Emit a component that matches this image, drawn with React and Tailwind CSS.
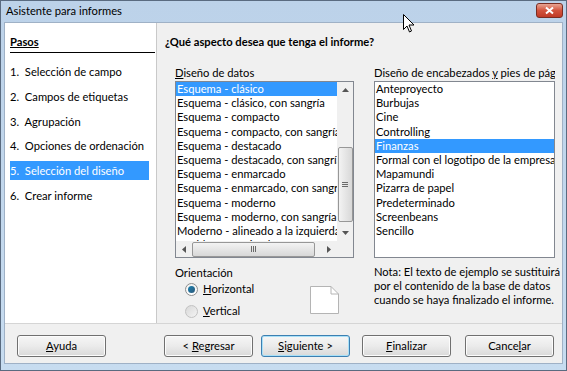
import React from "react";

const font = { fontFamily: 'Lato, "Noto Sans", sans-serif' };

const steps = [
  "1.  Selección de campo",
  "2.  Campos de etiquetas",
  "3.  Agrupación",
  "4.  Opciones de ordenación",
  "5.  Selección del diseño",
  "6.  Crear informe",
];

const dataLayouts = [
  "Esquema - clásico",
  "Esquema - clásico, con sangría",
  "Esquema - compacto",
  "Esquema - compacto, con sangría",
  "Esquema - destacado",
  "Esquema - destacado, con sangría",
  "Esquema - enmarcado",
  "Esquema - enmarcado, con sangría",
  "Esquema - moderno",
  "Esquema - moderno, con sangría",
  "Moderno - alineado a la izquierda",
  "Por bloques - simple",
];

const headerLayouts = [
  "Anteproyecto",
  "Burbujas",
  "Cine",
  "Controlling",
  "Finanzas",
  "Formal con el logotipo de la empresa",
  "Mapamundi",
  "Pizarra de papel",
  "Predeterminado",
  "Screenbeans",
  "Sencillo",
];

function Btn({ children, focused, className = "" }) {
  return (
    <button
      className={
        "h-[22px] w-[89px] rounded-[3px] border text-[11.2px] leading-none text-black bg-gradient-to-b from-[#f6f6f6] via-[#ebebeb] to-[#d9d9d9] " +
        (focused
          ? "border-[#3c7fb1] shadow-[inset_0_0_0_1px_#a8e0f8] "
          : "border-[#707070] shadow-[inset_0_0_0_1px_#fcfcfc] ") +
        className
      }
    >
      {children}
    </button>
  );
}

function Radio({ checked, children }) {
  return (
    <div className="flex items-center h-[22px] gap-[5px]">
      <span
        className={
          "w-[13px] h-[13px] rounded-full border flex items-center justify-center " +
          (checked
            ? "border-[#8e8f8f] bg-gradient-to-b from-[#f0f0f0] to-[#ffffff]"
            : "border-[#c2c2c2] bg-gradient-to-br from-[#d8d8d8] to-[#f4f4f4]")
        }
      >
        {checked && (
          <span className="w-[7px] h-[7px] rounded-full bg-gradient-to-br from-[#0c7fb0] to-[#2d5a7a]" />
        )}
      </span>
      <span className="text-[11.2px]">{children}</span>
    </div>
  );
}

export default function App() {
  return (
    <div
      className="w-[567px] h-[371px] relative overflow-hidden bg-gradient-to-b from-[#bcd2e9] to-[#c7dcf0] border border-[#5a6b80] flex flex-col text-black"
      style={font}
    >
      {/* title bar */}
      <div className="h-[21px] flex items-center justify-between pl-[5px] pr-[3px]">
        <span className="text-[11.2px] text-black">Asistente para informes</span>
        <div className="w-[27px] h-[15px] -mt-[3px] rounded-[3px] border border-[#7a2d22] bg-gradient-to-b from-[#e8a493] via-[#d2533d] to-[#c03a26] flex items-center justify-center">
          <svg width="11" height="9" viewBox="0 0 11 9">
            <path d="M2 1.5 L9 7.5 M9 1.5 L2 7.5" stroke="#fff" strokeWidth="2" />
          </svg>
        </div>
      </div>

      {/* client */}
      <div className="mx-[3px] flex-1 flex flex-col bg-[#f0f0f0] border border-[#9fb1c6]">
        <div className="flex h-[301px] border-b border-[#d5d5d5]">
          {/* left panel */}
          <div className="w-[152px] bg-white border-r border-[#c9c9c9] pt-[10px] pr-[1px]">
            <div className="ml-[5px] border-b border-black pb-[1px] text-[11.2px] font-bold leading-[18px]">
              <span className="underline">Pasos</span>
            </div>
            <div className="mt-[9px] flex flex-col gap-[5.8px] pl-[5px] pr-[6px]">
              {steps.map((s, i) => (
                <div
                  key={s}
                  className={
                    "h-[19px] leading-[19px] text-[11.2px] whitespace-pre " +
                    (i === 4 ? "bg-[#3399ff] text-white" : "")
                  }
                >
                  {s}
                </div>
              ))}
            </div>
          </div>

          {/* right panel */}
          <div className="flex-1 pt-[10px] pl-[8px]">
            <div className="text-[11.2px] font-bold leading-[18px]">
              ¿Qué aspecto desea que tenga el informe?
            </div>
            <div className="flex gap-[20px] ml-[10px] mt-[14px]">
              {/* data layouts */}
              <div className="w-[179px]">
                <div className="text-[11.2px] leading-[16px]">
                  <span className="underline">D</span>iseño de datos
                </div>
                <div className="h-[177px] border border-[#828790] bg-white flex flex-col">
                  <div className="flex flex-1 overflow-hidden">
                    <div className="flex-1 overflow-hidden">
                      {dataLayouts.map((d, i) => (
                        <div
                          key={d}
                          className={
                            "h-[14.2px] leading-[14px] text-[11.2px] whitespace-nowrap pl-[1px] " +
                            (i === 0 ? "bg-[#3399ff] text-white" : "")
                          }
                        >
                          {d}
                        </div>
                      ))}
                    </div>
                    {/* vertical scrollbar */}
                    <div className="w-[16px] bg-[#f0f0f0] flex flex-col items-center">
                      <div className="h-[16px] flex items-center justify-center">
                        <svg width="7" height="4" viewBox="0 0 7 4">
                          <path d="M0 4 L3.5 0 L7 4Z" fill="#555" />
                        </svg>
                      </div>
                      <div className="h-[49px]" />
                      <div className="w-[15px] h-[75px] rounded-[2px] border border-[#979797] bg-gradient-to-r from-[#f3f3f3] to-[#d8d8d8] flex flex-col items-center justify-center gap-[1px]">
                        <span className="w-[6px] h-[1px] bg-[#6a6a6a]" />
                        <span className="w-[6px] h-[1px] bg-[#6a6a6a]" />
                        <span className="w-[6px] h-[1px] bg-[#6a6a6a]" />
                      </div>
                      <div className="flex-1" />
                      <div className="h-[16px] flex items-center justify-center">
                        <svg width="7" height="4" viewBox="0 0 7 4">
                          <path d="M0 0 L3.5 4 L7 0Z" fill="#555" />
                        </svg>
                      </div>
                    </div>
                  </div>
                  {/* horizontal scrollbar */}
                  <div className="h-[16px] bg-[#f0f0f0] flex items-center">
                    <div className="w-[16px] flex items-center justify-center">
                      <svg width="4" height="7" viewBox="0 0 4 7">
                        <path d="M4 0 L0 3.5 L4 7Z" fill="#555" />
                      </svg>
                    </div>
                    <div className="w-[123px] h-[15px] rounded-[2px] border border-[#979797] bg-gradient-to-b from-[#f3f3f3] to-[#d8d8d8] flex items-center justify-center gap-[1px]">
                      <span className="w-[1px] h-[6px] bg-[#6a6a6a]" />
                      <span className="w-[1px] h-[6px] bg-[#6a6a6a]" />
                      <span className="w-[1px] h-[6px] bg-[#6a6a6a]" />
                    </div>
                    <div className="flex-1" />
                    <div className="w-[16px] flex items-center justify-center">
                      <svg width="4" height="7" viewBox="0 0 4 7">
                        <path d="M0 0 L4 3.5 L0 7Z" fill="#555" />
                      </svg>
                    </div>
                    <div className="w-[16px] h-[16px] bg-[#f0f0f0]" />
                  </div>
                </div>

                <div className="mt-[7px] text-[11.2px] leading-[16px]">Orientación</div>
                <div className="flex items-start -mt-[3px]">
                  <div className="pl-[10px] flex flex-col">
                    <Radio checked>
                      <span className="underline">H</span>orizontal
                    </Radio>
                    <Radio>
                      <span className="underline">V</span>ertical
                    </Radio>
                  </div>
                  <div className="ml-[56px] mt-[8px]">
                    <svg width="29" height="28" viewBox="0 0 29 28">
                      <path
                        d="M0.5 0.5 H21 L28.5 8 V27.5 H0.5 Z"
                        fill="#fff"
                        stroke="#b4b4b4"
                      />
                      <path d="M21 0.5 V8 H28.5" fill="none" stroke="#b4b4b4" />
                    </svg>
                  </div>
                </div>
              </div>

              {/* header layouts */}
              <div className="w-[181px]">
                <div className="text-[11.2px] leading-[16px] whitespace-nowrap overflow-hidden">
                  Diseño de encabezados <span className="underline">y</span> pies de página
                </div>
                <div className="h-[177px] border border-[#828790] bg-white overflow-hidden">
                  {headerLayouts.map((d, i) => (
                    <div
                      key={d}
                      className={
                        "h-[14.2px] leading-[14px] text-[11.2px] whitespace-nowrap pl-[1px] " +
                        (i === 4 ? "bg-[#3399ff] text-white" : "")
                      }
                    >
                      {d}
                    </div>
                  ))}
                </div>
                <div className="mt-[7px] text-[11.2px] leading-[14px] whitespace-nowrap">
                  Nota: El texto de ejemplo se sustituirá
                  <br />
                  por el contenido de la base de datos
                  <br />
                  cuando se haya finalizado el informe.
                </div>
              </div>
            </div>
          </div>
        </div>

        {/* button bar */}
        <div className="flex-1 flex items-center pl-[12px] pt-[5px]">
          <Btn>
            <span className="underline">A</span>yuda
          </Btn>
          <Btn className="ml-[58px]">
            &lt; <span className="underline">R</span>egresar
          </Btn>
          <Btn focused className="ml-[8px]">
            <span className="underline">S</span>iguiente &gt;
          </Btn>
          <Btn className="ml-[12px]">
            <span className="underline">F</span>inalizar
          </Btn>
          <Btn className="ml-[14px]">
            Cance<span className="underline">l</span>ar
          </Btn>
        </div>
      </div>
      <div className="h-[6px]" />

      {/* mouse cursor */}
      <svg
        className="absolute left-[402px] top-[13px]"
        width="12"
        height="19"
        viewBox="0 0 12 19"
      >
        <path
          d="M0.5 0.5 V15.5 L4 12 L6.5 18 L8.5 17 L6 11 H11 Z"
          fill="#fff"
          stroke="#000"
          strokeWidth="1"
        />
      </svg>
    </div>
  );
}
